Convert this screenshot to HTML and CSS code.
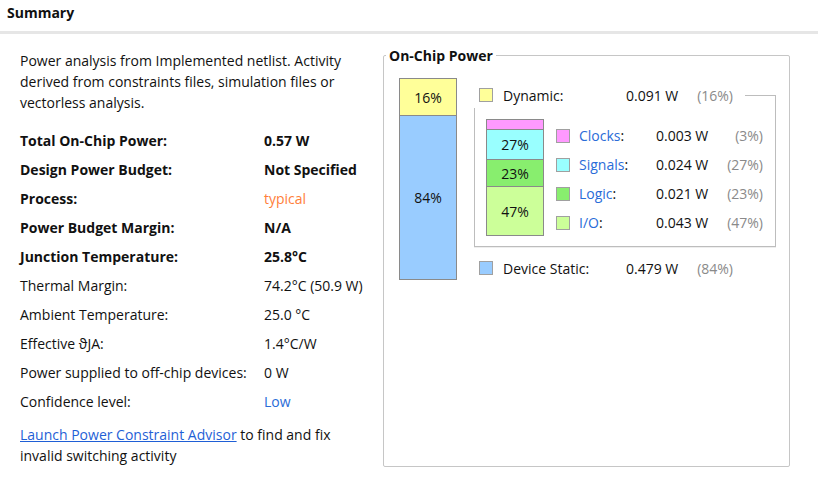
FILE: index.html
```html
<!DOCTYPE html>
<html>
<head>
<meta charset="utf-8">
<link rel="stylesheet" href="styles.css">
</head>
<body>
<div class="header">Summary</div>
<div class="main">
  <div class="left">
    <p class="intro">Power analysis from Implemented netlist. Activity derived from constraints files, simulation files or vectorless analysis.</p>
    <div class="rows">
      <div class="row strong"><span class="k">Total On-Chip Power:</span><span class="v">0.57 W</span></div>
      <div class="row strong"><span class="k">Design Power Budget:</span><span class="v">Not Specified</span></div>
      <div class="row"><span class="k b">Process:</span><span class="v orange">typical</span></div>
      <div class="row strong"><span class="k">Power Budget Margin:</span><span class="v">N/A</span></div>
      <div class="row strong"><span class="k">Junction Temperature:</span><span class="v">25.8°C</span></div>
      <div class="row"><span class="k">Thermal Margin:</span><span class="v">74.2°C (50.9 W)</span></div>
      <div class="row"><span class="k">Ambient Temperature:</span><span class="v">25.0 °C</span></div>
      <div class="row"><span class="k">Effective ϑJA:</span><span class="v">1.4°C/W</span></div>
      <div class="row"><span class="k">Power supplied to off-chip devices:</span><span class="v">0 W</span></div>
      <div class="row"><span class="k">Confidence level:</span><span class="v blue">Low</span></div>
    </div>
    <p class="advisor"><a href="#" class="link">Launch Power Constraint Advisor</a> to find and fix invalid switching activity</p>
  </div>
  <fieldset class="panel">
    <legend>On-Chip Power</legend>
    <div class="panel-body">
      <div class="bar big">
        <div class="seg yellow" style="height:36px">16%</div>
        <div class="seg lblue" style="height:164px">84%</div>
      </div>
      <div class="legend">
        <div class="lrow dyn-head">
          <span class="sq yellow"></span>
          <span class="lname">Dynamic:</span>
          <span class="lval">0.091 W</span>
          <span class="lpct">(16%)</span>
          <span class="bracket"></span>
        </div>
        <div class="dyn-box">
          <div class="bar small">
            <div class="seg pink" style="height:9px"></div>
            <div class="seg cyan" style="height:30px">27%</div>
            <div class="seg green" style="height:27px">23%</div>
            <div class="seg lgreen" style="height:49px">47%</div>
          </div>
          <div class="sub">
            <div class="srow"><span class="sq pink"></span><span class="sname"><span class="slink">Clocks</span>:</span><span class="sval">0.003 W</span><span class="spct">(3%)</span></div>
            <div class="srow"><span class="sq cyan"></span><span class="sname"><span class="slink">Signals</span>:</span><span class="sval">0.024 W</span><span class="spct">(27%)</span></div>
            <div class="srow"><span class="sq green"></span><span class="sname"><span class="slink">Logic</span>:</span><span class="sval">0.021 W</span><span class="spct">(23%)</span></div>
            <div class="srow"><span class="sq lgreen"></span><span class="sname"><span class="slink">I/O</span>:</span><span class="sval">0.043 W</span><span class="spct">(47%)</span></div>
          </div>
        </div>
        <div class="lrow static">
          <span class="sq lblue"></span>
          <span class="lname">Device Static:</span>
          <span class="lval">0.479 W</span>
          <span class="lpct">(84%)</span>
        </div>
      </div>
    </div>
  </fieldset>
</div>
</body>
</html>
```
FILE: styles.css
```css
* { box-sizing: border-box; }
html, body { margin: 0; padding: 0; background: #fff; }
body {
  font-family: "Open Sans", "Noto Sans", sans-serif;
  font-size: 14px;
  color: #111;
  width: 818px;
  height: 487px;
  overflow: hidden;
}
.header {
  height: 34px;
  padding: 3px 0 0 7px;
  font-weight: bold;
  font-size: 14px;
  border-bottom: 3px solid #e6e6e6;
}
.main {
  display: flex;
  align-items: flex-start;
}
.left {
  width: 383px;
  padding: 16px 22px 0 20px;
}
.intro, .advisor {
  margin: 0;
  line-height: 21px;
}
.rows {
  margin-top: 13px;
  display: flex;
  flex-direction: column;
}
.row {
  display: flex;
  height: 29px;
  align-items: center;
}
.row .k { width: 244px; flex: none; }
.v { white-space: nowrap; }
.strong { font-weight: bold; }
.b { font-weight: bold; }
.orange { color: #ff7e3a; }
.blue { color: #2a6cd8; }
.advisor { margin-top: 8px; }
.link { color: #1f5fd6; text-decoration: underline; }

.panel {
  margin: 12px 0 0 0;
  width: 407px;
  height: 421px;
  border: 1px solid #c6c6c6;
  border-radius: 2px;
  padding: 0;
  min-width: 0;
}
.panel legend {
  font-weight: bold;
  font-size: 14px;
  margin-left: 2px;
  padding: 0 3px;
}
.panel-body {
  display: flex;
  align-items: flex-start;
  padding: 13px 0 0 15px;
}
.bar {
  display: flex;
  flex-direction: column;
  border: 1px solid #8a8a8a;
  flex: none;
}
.bar.big { width: 58px; }
.bar.small { width: 58px; }
.seg {
  display: flex;
  align-items: center;
  justify-content: center;
}
.seg + .seg { border-top: 1px solid #8a8a8a; }
.yellow { background: #ffff99; }
.lblue { background: #99ccff; }
.pink { background: #ff99ff; }
.cyan { background: #99ffff; }
.green { background: #88ee6e; }
.lgreen { background: #ccff99; }

.legend {
  margin-left: 17px;
  width: 302px;
  display: flex;
  flex-direction: column;
  padding-top: 4px;
}
.lrow {
  display: flex;
  align-items: center;
  height: 26px;
  padding-left: 5px;
}
.sq {
  width: 14px;
  height: 14px;
  border: 1px solid #a0a0a0;
  flex: none;
}
.lname { margin-left: 10px; width: 123px; flex: none; }
.lval { width: 69px; flex: none; white-space: nowrap; }
.lpct { width: 38px; flex: none; text-align: right; color: #8a8a8a; }
.bracket {
  align-self: flex-end;
  flex: 1;
  height: 13px;
  margin-left: 12px;
  border-top: 1px solid #bdbdbd;
  border-right: 1px solid #bdbdbd;
}
.dyn-box {
  display: flex;
  align-items: flex-start;
  border: 1px solid #bdbdbd;
  border-top: none;
  padding: 11px 0 9px 11px;
  box-shadow: 0 1px 0 #eee;
}
.sub {
  margin-left: 12px;
  padding-top: 2px;
  display: flex;
  flex-direction: column;
}
.srow {
  display: flex;
  align-items: center;
  height: 29px;
}
.sname { margin-left: 9px; width: 77px; flex: none; }
.slink { color: #2a6cd8; }
.sval { width: 70px; flex: none; white-space: nowrap; }
.spct { width: 37px; flex: none; text-align: right; color: #8a8a8a; }
.static { margin-top: 8px; }
```
